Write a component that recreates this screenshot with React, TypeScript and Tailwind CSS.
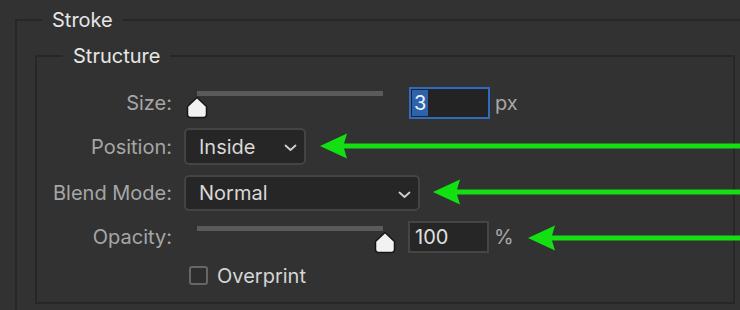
import type { ReactNode } from 'react';

function Thumb() {
  return (
    <svg width="22" height="23" viewBox="0 0 22 23">
      <path
        d="M11 1.5 L20.5 10.5 V18.5 Q20.5 21.5 17.5 21.5 H4.5 Q1.5 21.5 1.5 18.5 V10.5 Z"
        fill="#f2f2f2"
        stroke="#161616"
        strokeWidth="1.5"
        strokeLinejoin="round"
      />
    </svg>
  );
}

function Chevron() {
  return (
    <svg width="13" height="8" viewBox="0 0 13 8" className="mt-[3px]">
      <path d="M1.5 1.5 L6.5 6 L11.5 1.5" fill="none" stroke="#d0d0d0" strokeWidth="1.8" strokeLinecap="round" strokeLinejoin="round" />
    </svg>
  );
}

function Slider({ thumbLeft, trackTop, thumbTop }: { thumbLeft: number; trackTop: number; thumbTop: number }) {
  return (
    <div className="relative w-[216px] h-[32px] shrink-0">
      <div className="absolute left-[13px] w-[186px] h-[5px] bg-[#5a5a5a]" style={{ top: trackTop }} />
      <div className="absolute" style={{ left: thumbLeft, top: thumbTop }}>
        <Thumb />
      </div>
    </div>
  );
}

function Row({ label, className, children }: { label?: string; className: string; children: ReactNode }) {
  return (
    <div className={`flex items-center ${className}`}>
      <div className="w-[135px] shrink-0 text-right text-[#a6a6a6]">{label}</div>
      <div className="ml-[12px] flex items-center">{children}</div>
    </div>
  );
}

function Select({ value, size }: { value: string; size: string }) {
  return (
    <div className={`flex items-center justify-between ${size} rounded-[5px] border-2 border-[#444444] bg-[#262626] pl-[13px] pr-[7px] text-[#d8d8d8]`}>
      <span>{value}</span>
      <Chevron />
    </div>
  );
}

export default function App() {
  return (
    <div className="relative w-[740px] h-[310px] overflow-hidden bg-[#323232] font-['Inter','Liberation_Sans',sans-serif] text-[20px] leading-[24px]">
      {/* Stroke group */}
      <fieldset className="ml-[15px] mt-[8px] w-[800px] h-[400px] border-2 border-[#272727] pl-[18px] pt-[12px]">
        <legend className="ml-[7px] px-[10px] text-[#e6e6e6]">Stroke</legend>

        {/* Structure group */}
        <fieldset className="w-[700px] h-[260px] border-2 border-[#272727]">
          <legend className="ml-[26px] px-[10px] text-[#e6e6e6]">Structure</legend>

          <Row label="Size:" className="mt-[19px] h-[32px]">
            <Slider thumbLeft={2} trackTop={4} thumbTop={9} />
            <div className="ml-[9px] flex items-center w-[81px] h-[32px] border-2 border-[#2f6cc0] bg-[#232323] p-[1px]">
              <span className="h-full px-[2px] bg-[#2d63ab] text-[#eef2f8] leading-[26px]">3</span>
            </div>
            <span className="ml-[5px] text-[#a8a8a8]">px</span>
          </Row>

          <Row label="Position:" className="mt-[9px] h-[37px]">
            <Select value="Inside" size="w-[122px] h-[37px]" />
          </Row>

          <Row label="Blend Mode:" className="mt-[10px] h-[36px]">
            <Select value="Normal" size="w-[236px] h-[36px]" />
          </Row>

          <Row label="Opacity:" className="mt-[10px] h-[32px]">
            <Slider thumbLeft={190} trackTop={5} thumbTop={10} />
            <div className="ml-[8px] flex items-center w-[81px] h-[32px] border-2 border-[#454545] bg-[#262626] pl-[5px] text-[#e0e0e0]">
              100
            </div>
            <span className="ml-[5px] text-[#a8a8a8]">%</span>
          </Row>

          <Row className="mt-[13px] h-[19px]">
            <label className="ml-[5px] flex items-center">
              <span className="w-[19px] h-[19px] rounded-[3px] border-2 border-[#666666] bg-[#2e2e2e]" />
              <span className="ml-[9px] text-[#d6d6d6]">Overprint</span>
            </label>
          </Row>
        </fieldset>
      </fieldset>

      {/* annotation arrows */}
      <svg className="absolute left-0 top-0 pointer-events-none" width="740" height="310" viewBox="0 0 740 310">
        <path d="M320 146 L347 133.5 L344 143.5 L740 143.5 L740 148.5 L344 148.5 L347 158.5 Z" fill="#13e013" />
        <path d="M433 192 L460 179.5 L457 189.5 L740 189.5 L740 194.5 L457 194.5 L460 204.5 Z" fill="#13e013" />
        <path d="M528 238 L555 225.5 L552 235.5 L740 235.5 L740 240.5 L552 240.5 L555 250.5 Z" fill="#13e013" />
      </svg>
    </div>
  );
}
